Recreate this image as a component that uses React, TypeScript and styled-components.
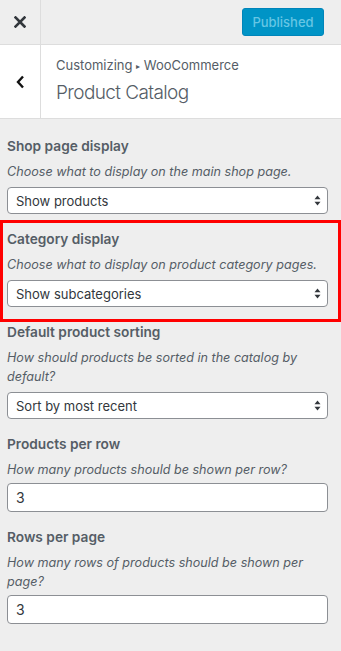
import React from 'react';
import styled, { createGlobalStyle } from 'styled-components';

const GlobalStyle = createGlobalStyle`
  html, body {
    margin: 0;
    padding: 0;
    background: #eeeeee;
  }
  body {
    font-family: Inter, "Liberation Sans", sans-serif;
    color: #555d66;
  }
`;

interface ControlProps {
  title: string;
  description: string;
  highlighted?: boolean;
  children: React.ReactNode;
}

// one customizer control: title, italic help text and its field
const Control: React.FC<ControlProps> = ({ title, description, highlighted, children }) => (
  <ControlWrap highlighted={highlighted}>
    <ControlTitle>{title}</ControlTitle>
    <Description>{description}</Description>
    {children}
  </ControlWrap>
);

const SelectField: React.FC<{ value: string }> = ({ value }) => (
  <SelectBox>
    <span>{value}</span>
    <svg width="7" height="11" viewBox="0 0 7 11">
      <path d="M3.5 0.5 L6.5 4.2 L0.5 4.2 Z" fill="#32373c" />
      <path d="M3.5 10.5 L6.5 6.8 L0.5 6.8 Z" fill="#32373c" />
    </svg>
  </SelectBox>
);

const App: React.FC = () => {
  return (
    <>
      <GlobalStyle />
      <Sidebar>
        <TopBar>
          <IconCell>
            <svg width="12" height="12" viewBox="0 0 12 12">
              <path d="M1.5 1.5 L10.5 10.5 M10.5 1.5 L1.5 10.5" stroke="#32373c" strokeWidth="2.6" strokeLinecap="square" />
            </svg>
          </IconCell>
          <PublishButton disabled>Published</PublishButton>
        </TopBar>

        <SectionHeader>
          <IconCell>
            <svg width="9" height="14" viewBox="0 0 9 14">
              <path d="M7 1.5 L2 7 L7 12.5" stroke="#111" strokeWidth="2.4" fill="none" />
            </svg>
          </IconCell>
          <SectionTitle>
            <Breadcrumb>
              Customizing <Arrow>▸</Arrow> WooCommerce
            </Breadcrumb>
            <PanelName>Product Catalog</PanelName>
          </SectionTitle>
        </SectionHeader>

        <Controls>
          <Control title="Shop page display" description="Choose what to display on the main shop page.">
            <SelectField value="Show products" />
          </Control>
          <Control
            highlighted
            title="Category display"
            description="Choose what to display on product category pages."
          >
            <SelectField value="Show subcategories" />
          </Control>
          <Control
            title="Default product sorting"
            description="How should products be sorted in the catalog by default?"
          >
            <SelectField value="Sort by most recent" />
          </Control>
          <Control title="Products per row" description="How many products should be shown per row?">
            <TextField>3</TextField>
          </Control>
          <Control
            title="Rows per page"
            description="How many rows of products should be shown per page?"
          >
            <TextField>3</TextField>
          </Control>
        </Controls>
      </Sidebar>
    </>
  );
};

export default App;

const Sidebar = styled.div`
  width: 341px;
  min-height: 651px;
  background: #eeeeee;
  display: flex;
  flex-direction: column;
`;

const TopBar = styled.div`
  height: 44px;
  display: flex;
  align-items: center;
  background: #eeeeee;
  border-bottom: 1px solid #dddddd;
`;

const IconCell = styled.div`
  width: 41px;
  align-self: stretch;
  display: flex;
  align-items: center;
  justify-content: center;
  border-right: 1px solid #dddddd;
  box-sizing: border-box;
  flex: none;
`;

const PublishButton = styled.button`
  margin-left: auto;
  margin-right: 17px;
  width: 82px;
  height: 28px;
  border: 1px solid #0085ba;
  border-radius: 3px;
  background: #0094c6;
  color: #66c6e4;
  font-family: Inter, "Liberation Sans", sans-serif;
  font-size: 13px;
  font-weight: 500;
  padding: 0;
`;

const SectionHeader = styled.div`
  height: 73px;
  display: flex;
  background: #ffffff;
  border-bottom: 1px solid #dddddd;
`;

const SectionTitle = styled.div`
  display: flex;
  flex-direction: column;
  justify-content: center;
  padding-left: 15px;
`;

const Breadcrumb = styled.span`
  font-size: 13px;
  line-height: 18px;
  color: #555d66;
`;

const Arrow = styled.span`
  font-size: 8px;
  vertical-align: 1px;
`;

const PanelName = styled.span`
  font-size: 19px;
  font-weight: 300;
  letter-spacing: -0.6px;
  line-height: 30px;
  color: #555d66;
  margin-top: 3px;
`;

const Controls = styled.div`
  display: flex;
  flex-direction: column;
  gap: 13px;
  padding: 15px 13px 0 7px;
`;

const ControlWrap = styled.div<{ highlighted?: boolean }>`
  position: relative;
  display: flex;
  flex-direction: column;

  &::after {
    content: '';
    display: ${(props) => (props.highlighted ? 'block' : 'none')};
    position: absolute;
    top: -7px;
    bottom: -15px;
    left: -7px;
    right: -13px;
    border: 3px solid #ff0000;
    pointer-events: none;
  }
`;

const ControlTitle = styled.div`
  font-size: 13.7px;
  font-weight: 600;
  line-height: 24px;
  color: #555d66;
  margin-bottom: 4px;
`;

const Description = styled.div`
  font-size: 12.6px;
  font-style: italic;
  line-height: 19px;
  color: #555d66;
  margin-bottom: 6px;
`;

const SelectBox = styled.div`
  height: 27px;
  box-sizing: border-box;
  display: flex;
  align-items: center;
  justify-content: space-between;
  padding: 0 6px 0 8px;
  background: #ffffff;
  border: 1px solid #8c8f94;
  border-radius: 4px;
  font-size: 13px;
  color: #32373c;
`;

const TextField = styled.div`
  height: 29px;
  margin-top: -2px;
  box-sizing: border-box;
  display: flex;
  align-items: center;
  padding: 0 8px;
  background: #ffffff;
  border: 1px solid #8c8f94;
  border-radius: 4px;
  font-size: 14px;
  color: #32373c;
`;
